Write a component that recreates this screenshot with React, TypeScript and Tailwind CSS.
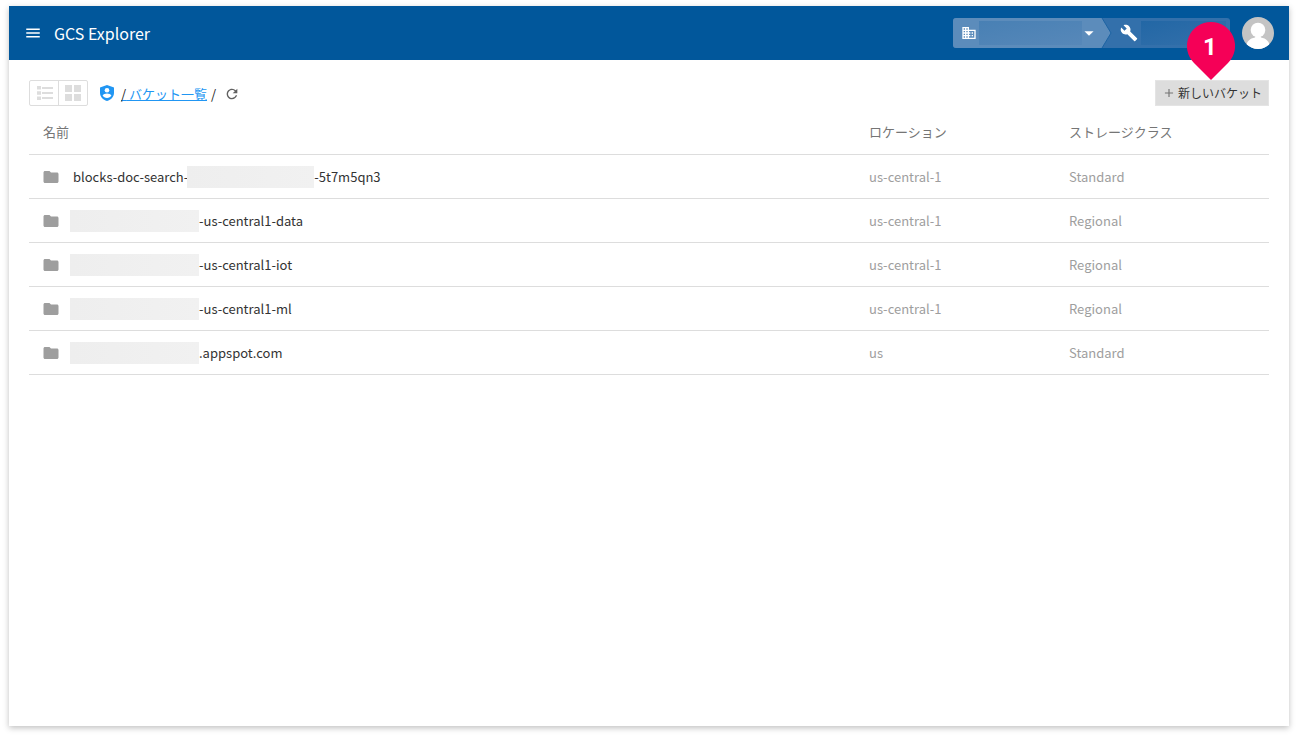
import { MdArrowDropDown, MdBuild, MdBusiness, MdFolder, MdMenu, MdRefresh, MdAdd } from "react-icons/md";

type Bucket = {
  prefix: string;
  suffix: string;
  location: string;
  storageClass: string;
};

const buckets: Bucket[] = [
  { prefix: "blocks-doc-search-", suffix: "-5t7m5qn3", location: "us-central-1", storageClass: "Standard" },
  { prefix: "", suffix: "-us-central1-data", location: "us-central-1", storageClass: "Regional" },
  { prefix: "", suffix: "-us-central1-iot", location: "us-central-1", storageClass: "Regional" },
  { prefix: "", suffix: "-us-central1-ml", location: "us-central-1", storageClass: "Regional" },
  { prefix: "", suffix: ".appspot.com", location: "us", storageClass: "Standard" },
];

function ListIcon() {
  return (
    <svg viewBox="0 0 16 14" className="h-[14px] w-4" fill="currentColor" aria-hidden="true">
      <path d="M0 0h4v3.5H0zM0 5.25h4v3.5H0zM0 10.5h4V14H0zM5 1h11v2H5zM5 6h11v2H5zM5 11h11v2H5z" />
    </svg>
  );
}

function GridIcon() {
  return (
    <svg viewBox="0 0 16 16" className="size-4" fill="currentColor" aria-hidden="true">
      <path d="M0 0h7v7H0zM9 0h7v7H9zM0 9h7v7H0zM9 9h7v7H9z" />
    </svg>
  );
}

function ShieldIcon() {
  return (
    <svg viewBox="0 0 14 16" className="h-4 w-[14px] text-[#2196f3]" aria-hidden="true">
      <path fill="currentColor" d="M7 0l7 2.6v5.2c0 3.9-2.9 7.3-7 8.2-4.1-.9-7-4.3-7-8.2V2.6z" />
      <circle cx="7" cy="5.2" r="2.3" fill="#fff" />
      <path fill="#fff" d="M2.6 10.6C3 9.2 5.3 8.5 7 8.5s4 .7 4.4 2.1C10.5 12 9 13 7 13s-3.5-1-4.4-2.4z" />
    </svg>
  );
}

function Header() {
  return (
    <header className="relative flex h-[54px] items-center bg-[#01579b] px-[15px] text-white">
      <button type="button" aria-label="メニュー" className="flex size-[18px] items-center justify-center">
        <MdMenu size={18} />
      </button>
      <h1 className="ml-3 text-base leading-6 font-normal">GCS Explorer</h1>
      <div className="ml-auto flex h-[30px] w-[277px] overflow-hidden rounded-[3px] bg-[#3370ab]">
        <button type="button" aria-label="組織" className="relative flex w-[159px] items-center pl-2">
          <svg viewBox="0 0 159 30" className="absolute inset-0 size-full" aria-hidden="true">
            <path d="M0 0h149l9 15-9 15H0z" fill="#5c8cbb" />
            <path d="M149 0l9 15-9 15" fill="none" stroke="#1d63a3" />
          </svg>
          <MdBusiness size={16} className="relative" />
          <span className="relative ml-[2px] h-6 w-[103px] bg-linear-to-br from-[#4880b4] to-[#5788b9]" />
          <MdArrowDropDown size={22} className="relative -ml-1" />
        </button>
        <button type="button" aria-label="プロジェクト" className="flex flex-1 items-center pl-2">
          <MdBuild size={18} />
          <span className="ml-[3px] h-6 w-[85px] bg-linear-to-br from-[#2267a5] to-[#3370ab]" />
        </button>
      </div>
      <button type="button" aria-label="アカウント" className="ml-3 size-8 overflow-hidden rounded-full">
        <svg viewBox="0 0 32 32" className="size-8" aria-hidden="true">
          <rect width="32" height="32" fill="#c4c4c4" />
          <circle cx="16" cy="13" r="7.3" fill="#fff" />
          <path d="M4 32c0-8 4-10.500 9-11.500l1-2h4l1 2c5 1 9 3.500 9 11.500z" fill="#fff" />
        </svg>
      </button>
      <div className="absolute top-4 right-[54px] z-10 h-[58px] w-12">
        <svg viewBox="0 0 48 58" className="absolute inset-0 size-full" aria-hidden="true">
          <path d="M24 0a24 24 0 0 1 17 41L24 58 7 41A24 24 0 0 1 24 0z" fill="#f50057" />
        </svg>
        <span className="relative block pr-[2px] text-center font-[Roboto] text-2xl leading-[50px] font-bold">1</span>
      </div>
    </header>
  );
}

function Toolbar() {
  return (
    <div className="flex items-center">
      <div className="flex h-[26px] rounded-xs border border-[#dddddd] text-[#dddddd]">
        <button
          type="button"
          aria-label="リスト表示"
          className="flex w-[29px] items-center justify-end border-r border-[#dddddd] pr-[5px]"
        >
          <ListIcon />
        </button>
        <button type="button" aria-label="グリッド表示" className="flex w-7 items-center justify-center">
          <GridIcon />
        </button>
      </div>
      <nav aria-label="パンくずリスト" className="ml-3 flex items-center text-[13px] leading-5 text-[#212121]">
        <ShieldIcon />
        <a href="#buckets" className="ml-[7px] pt-0.5 text-[#2196f3] underline">
          <span className="text-[#212121]">/</span> バケット一覧
        </a>
        <span className="ml-1 pt-0.5">/</span>
      </nav>
      <button type="button" aria-label="更新" className="ml-2 pt-0.5 text-[#616161]">
        <MdRefresh size={16} />
      </button>
      <button
        type="button"
        className="ml-auto flex h-[26px] items-center gap-0.5 border border-[#e4e4e4] bg-[#dddddd] px-[6px] text-xs text-[#333333]"
      >
        <MdAdd size={14} className="text-[#757575]" />
        新しいバケット
      </button>
    </div>
  );
}

function BucketTable() {
  return (
    <table id="buckets" className="w-full table-fixed border-collapse text-left text-[13px] leading-5">
      <thead>
        <tr className="h-12 border-b border-[#dddddd] text-[#757575]">
          <th className="pt-1 pl-[14px] font-normal">名前</th>
          <th className="w-[200px] pt-1 font-normal">ロケーション</th>
          <th className="w-[200px] pt-1 font-normal">ストレージクラス</th>
        </tr>
      </thead>
      <tbody>
        {buckets.map((bucket) => (
          <tr key={bucket.suffix} className="h-11 border-b border-[#dddddd] text-[#9e9e9e]">
            <td className="pt-0.5">
              <div className="flex items-center pl-[13px] text-[#333333]">
                <MdFolder size={18} className="mr-[10px] text-[#9e9e9e]" />
                {bucket.prefix && <span className="-mr-px ml-[3px]">{bucket.prefix}</span>}
                <span
                  className={
                    bucket.prefix
                      ? "h-[22px] w-[127px] bg-linear-to-r from-[#eeeeee] to-[#f1f1f1]"
                      : "h-[22px] w-[129px] bg-linear-to-r from-[#eeeeee] to-[#f1f1f1]"
                  }
                />
                <span>{bucket.suffix}</span>
              </div>
            </td>
            <td className="pt-0.5">{bucket.location}</td>
            <td className="pt-0.5">{bucket.storageClass}</td>
          </tr>
        ))}
      </tbody>
    </table>
  );
}

export default function App() {
  return (
    <div className="flex min-h-screen flex-col bg-white px-[9px] pt-[6px] pb-3 font-['Noto_Sans_CJK_JP',sans-serif]">
      <div className="flex-1 bg-white shadow-[0_2px_6px_rgba(0,0,0,0.25)]">
        <Header />
        <main className="px-5 pt-5">
          <Toolbar />
          <BucketTable />
        </main>
      </div>
    </div>
  );
}
